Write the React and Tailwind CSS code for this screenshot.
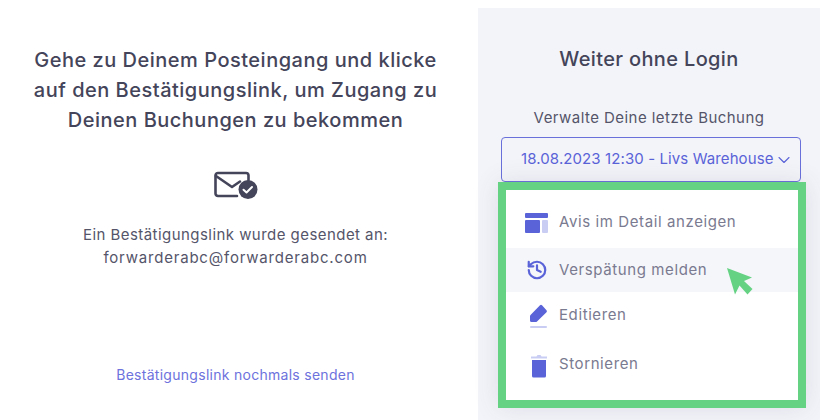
import React from 'react';
import { ChevronDown, History } from 'lucide-react';

function MailCheck() {
  return (
    <svg width="46" height="30" viewBox="0 0 46 30" fill="none">
      <path d="M24 25H5a2.500 2.500 0 0 1-2.500-2.500V4.500A2.500 2.500 0 0 1 5 2h28a2.500 2.500 0 0 1 2.500 2.500V9" stroke="#44445a" strokeWidth="2.600" strokeLinecap="round" />
      <path d="M3 5l16 11 8-5.500" stroke="#44445a" strokeWidth="2.600" strokeLinejoin="round" strokeLinecap="round" />
      <circle cx="35" cy="18.500" r="9.500" fill="#44445a" />
      <path d="M30.500 18.700l3 2.800 5.500-5.500" stroke="#fff" strokeWidth="2" strokeLinecap="round" strokeLinejoin="round" />
    </svg>
  );
}

function LayoutIcon() {
  return (
    <svg width="24" height="20" viewBox="0 0 24 20">
      <rect x="0" y="0" width="23" height="5" rx="1" fill="#5a63d8" />
      <rect x="0" y="7" width="15" height="13" rx="1" fill="#5a63d8" />
      <rect x="17" y="7" width="6" height="13" rx="1" fill="#c9cdf3" />
    </svg>
  );
}

function PenIcon() {
  return (
    <svg width="20" height="26" viewBox="0 0 20 26">
      <path d="M11 1.200a1.500 1.500 0 0 1 2 0l4.500 5a1.500 1.500 0 0 1 0 2L8 17.500a2 2 0 0 1-1.500.5H2.500A1.500 1.500 0 0 1 1 16.500V12.500a2 2 0 0 1 .5-1.500z" fill="#5a63d8" />
      <rect x="1" y="22" width="17" height="2" rx="1" fill="#c9cdf3" />
    </svg>
  );
}

function TrashIcon() {
  return (
    <svg width="18" height="24" viewBox="0 0 18 24">
      <path d="M1 2.500h5.500L7.500 1h3l1 1.500H17v2H1z" fill="#c9cdf3" />
      <path d="M2 6h14v16a1.500 1.500 0 0 1-1.500 1.500h-11A1.500 1.500 0 0 1 2 22z" fill="#5a63d8" />
    </svg>
  );
}

function Cursor() {
  return (
    <svg className="absolute left-[221px] top-[78px]" width="26" height="28" viewBox="0 0 26 28">
      <path d="M0 0l25 9.500-8 3.500 8.500 8-5 5.500-8-9-4.500 9z" fill="#65d283" />
    </svg>
  );
}

const items = [
  { label: 'Avis im Detail anzeigen', icon: <LayoutIcon />, cls: 'h-[45px] pb-[6px]', iconCls: 'pl-[9px]' },
  { label: 'Verspätung melden', icon: <History size={22} color="#5a63d8" strokeWidth={2.400} />, cls: 'h-[44px] bg-[#f5f6fa] text-[#5f5f74]', iconCls: 'pl-[9px]' },
  { label: 'Editieren', icon: <PenIcon />, cls: 'h-[46px]', iconCls: 'pl-[12px] pt-[4px]' },
  { label: 'Stornieren', icon: <TrashIcon />, cls: 'h-[52px]', iconCls: 'pl-[12px] pt-[4px]' },
];

export default function App() {
  return (
    <div className="flex h-[420px] w-[820px] overflow-hidden bg-white font-['Inter',sans-serif]">
      <div className="flex w-[478px] flex-col items-center pl-[2px] pt-[45px] pr-[9px] text-[#44445a]">
        <h1 className="whitespace-nowrap text-center text-[20px] font-medium leading-[30px] tracking-[0.5px]">
          Gehe zu Deinem Posteingang und klicke
          <br />
          auf den Bestätigungslink, um Zugang zu
          <br />
          Deinen Buchungen zu bekommen
        </h1>
        <div className="mt-[35px] flex h-[32px] items-center">
          <MailCheck />
        </div>
        <p className="mt-[21px] whitespace-nowrap text-center text-[15px] leading-[23px] tracking-[0.45px] text-[#55556a]">
          Ein Bestätigungslink wurde gesendet an:
          <br />
          <span className="tracking-[0.8px]">forwarderabc@forwarderabc.com</span>
        </p>
        <a className="mt-[95px] text-[14px] tracking-[0.28px] text-[#6d72dd]">Bestätigungslink nochmals senden</a>
      </div>

      <div className="mt-2 flex w-[342px] flex-col bg-[#f3f4f9]">
        <h2 className="mt-[38px] text-center text-[20px] font-medium leading-[26px] tracking-[0.35px] text-[#44445a]">Weiter ohne Login</h2>
        <p className="mt-[35px] text-center text-[15px] leading-[22px] tracking-[0.45px] text-[#55556a]">Verwalte Deine letzte Buchung</p>
        <div className="ml-[23px] mt-[8px] flex h-[45px] w-[300px] items-center justify-between rounded-[4px] border border-[#6a70da] pl-[19px] pr-[6px] text-[15px] tracking-[0.1px] text-[#5a63d8]">
          <span className="whitespace-nowrap">18.08.2023 12:30 - Livs Warehouse</span>
          <ChevronDown size={20} strokeWidth={1.300} />
        </div>
        <div className="relative ml-[20px] h-[226px] w-[308px] border-[8px] border-[#65d283] bg-white pt-[13px] shadow-[0_0_24px_rgba(70,70,110,0.12)]">
          {items.map((item) => (
            <div key={item.label} className={`flex items-center text-[15px] tracking-[0.6px] text-[#7a7a90] ${item.cls}`}>
              <div className={`flex w-[53px] shrink-0 justify-center ${item.iconCls}`}>{item.icon}</div>
              <span>{item.label}</span>
            </div>
          ))}
          <Cursor />
        </div>
      </div>
    </div>
  );
}
